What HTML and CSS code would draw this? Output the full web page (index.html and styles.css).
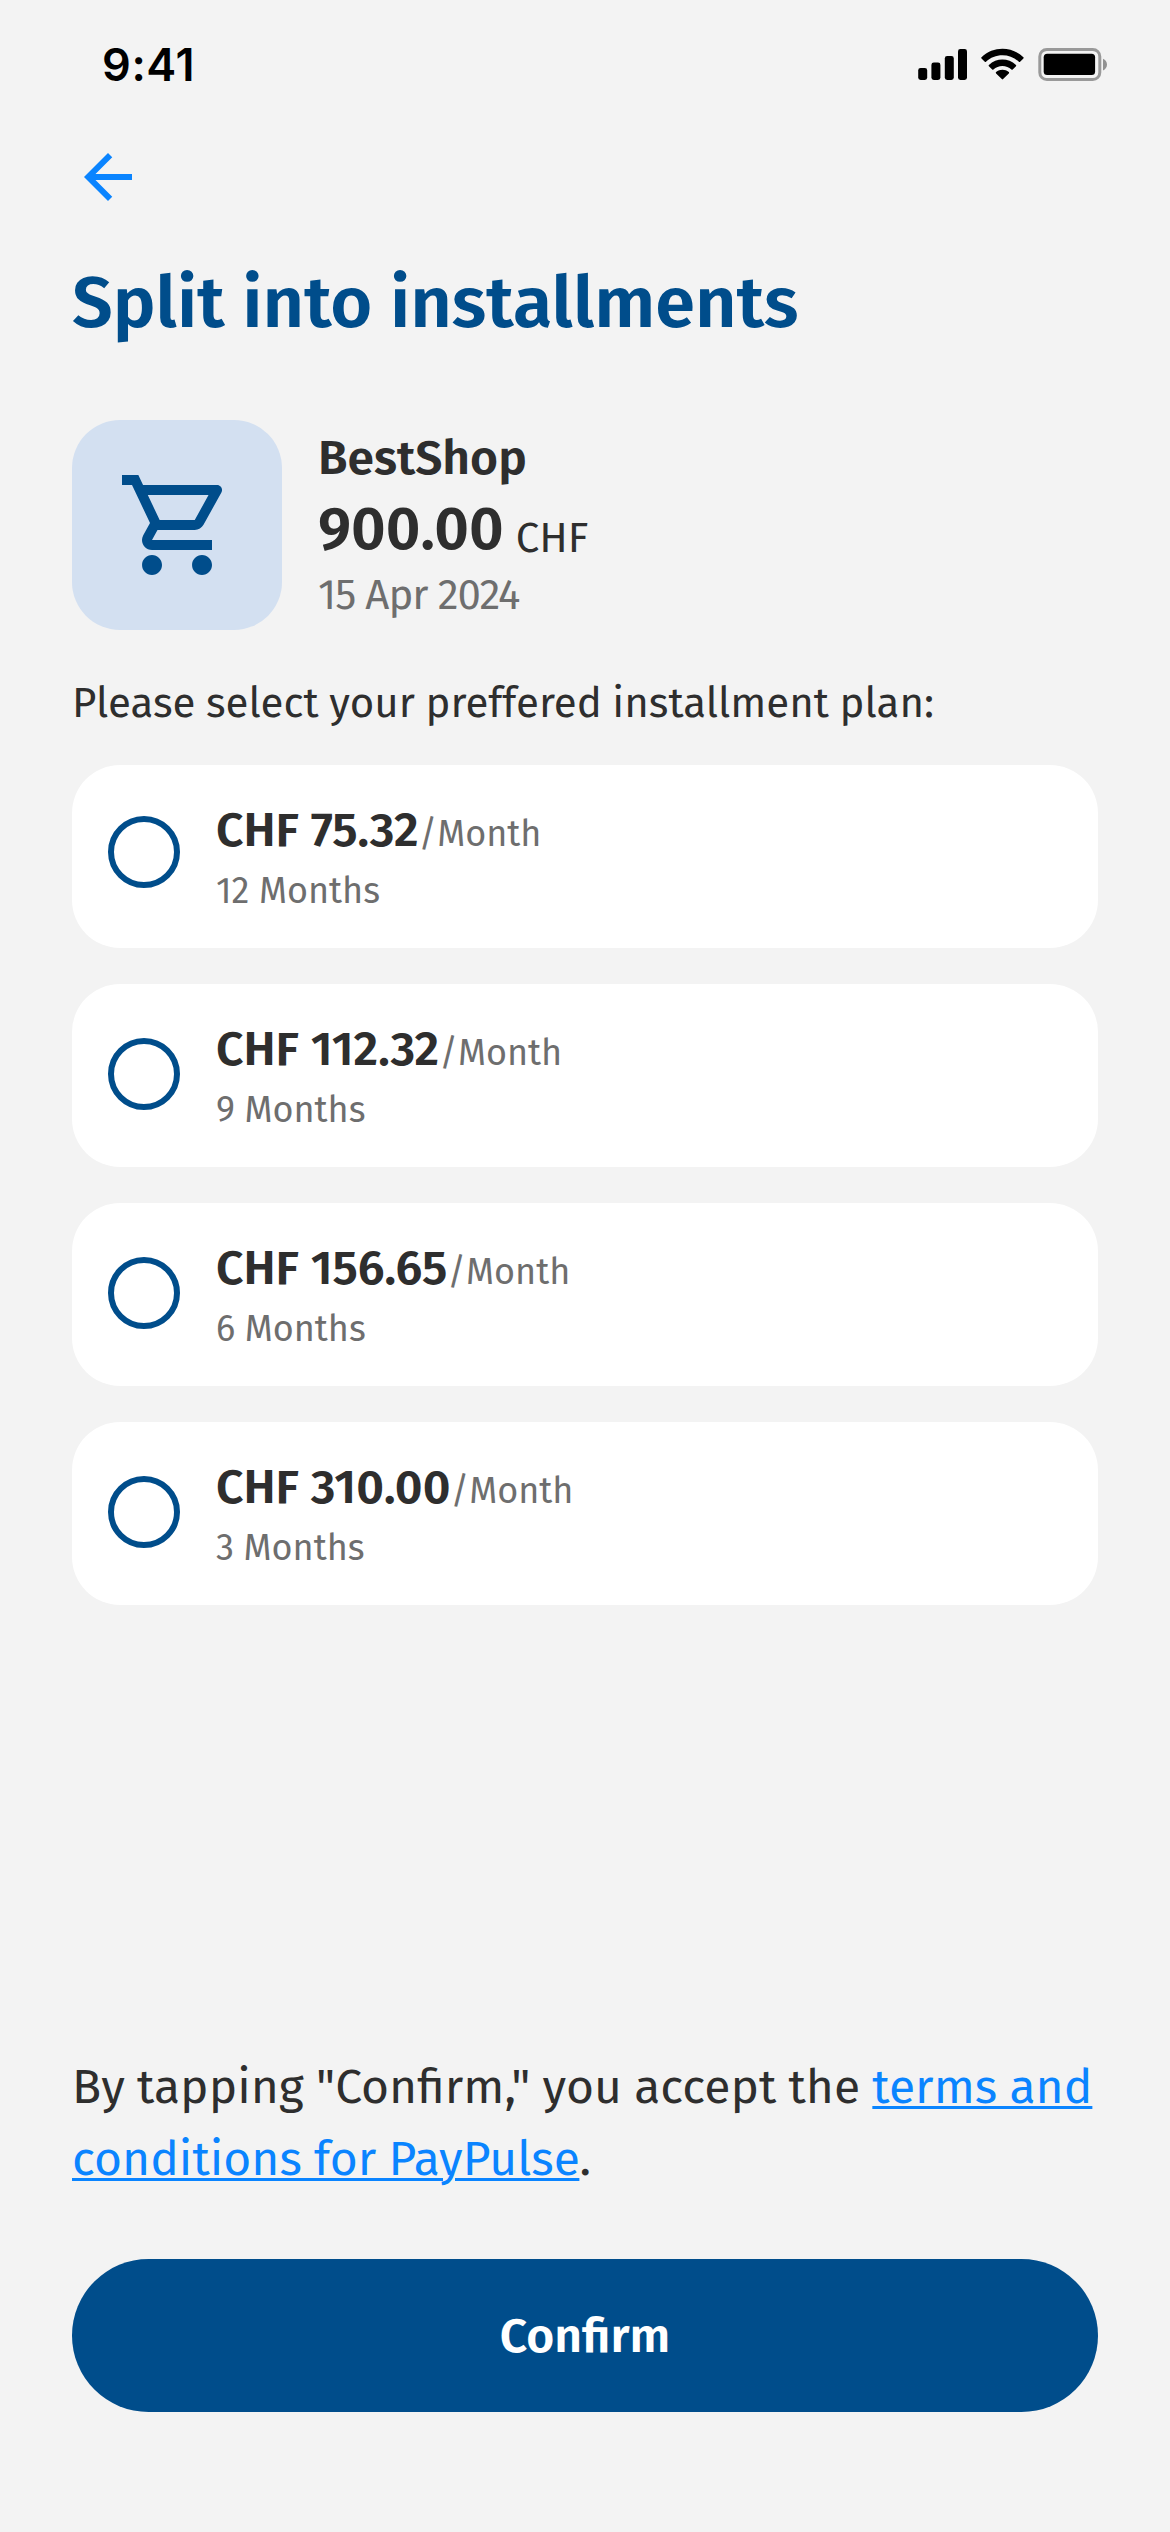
FILE: index.html
```html
<!DOCTYPE html>
<html lang="en">
<head>
<meta charset="utf-8">
<title>Split into installments</title>
<link rel="stylesheet" href="styles.css">
</head>
<body>
<div class="screen">
  <header class="status-bar">
    <span class="time">9:41</span>
    <svg class="status-icons" width="192" height="36" viewBox="0 0 192 36" aria-hidden="true">
      <rect x="3.2" y="22" width="9" height="12" rx="2.4"/>
      <rect x="16.4" y="16.500" width="9" height="17.500" rx="2.400"/>
      <rect x="29.800" y="10" width="9" height="24" rx="2.400"/>
      <rect x="43" y="3" width="9" height="31" rx="2.400"/>
      <path d="M87.400 8.300C93.500 8.300 99.400 10.600 103.900 14.800C104.200 15.100 104.800 15.100 105.100 14.800L108.400 11.500C108.800 11.100 108.800 10.500 108.400 10.200C96.700-1 78.200-1 66.500 10.200C66.100 10.500 66.100 11.100 66.500 11.500L69.800 14.800C70.100 15.100 70.700 15.100 71 14.800C75.400 10.600 81.300 8.300 87.400 8.300ZM87.400 19.100C90.800 19.100 94 20.300 96.400 22.600C96.800 22.900 97.300 22.900 97.700 22.500L101 19.200C101.300 18.900 101.300 18.300 101 17.900C93.300 10.700 81.500 10.700 73.900 17.900C73.500 18.300 73.500 18.900 73.900 19.200L77.200 22.500C77.500 22.900 78.100 22.900 78.400 22.600C80.900 20.300 84.100 19.100 87.400 19.100ZM93.800 25.100C94.200 25.500 94.200 26.100 93.800 26.400L88.100 32.100C87.700 32.500 87.100 32.500 86.800 32.100L81.100 26.400C80.700 26.100 80.700 25.500 81.100 25.100C84.700 22 90.200 22 93.800 25.100Z" transform="translate(0 1)"/>
      <rect class="battery-shell" x="124.800" y="3.500" width="60" height="30" rx="7"/>
      <rect x="128.700" y="7.700" width="51.400" height="21.300" rx="3.500"/>
      <path class="battery-cap" d="M188 12.700v11.800c2.500-1 4-3.300 4-5.900s-1.500-4.900-4-5.900z"/>
    </svg>
  </header>

  <nav class="nav">
    <a class="back" href="#" aria-label="Back">
      <svg width="72" height="72" viewBox="0 0 24 24"><path d="M20 11H7.830l5.590-5.590L12 4l-8 8 8 8 1.410-1.410L7.830 13H20v-2z"/></svg>
    </a>
  </nav>

  <main class="content">
    <h1 class="title">Split into installments</h1>

    <section class="purchase">
      <div class="shop-icon">
        <svg width="120" height="120" viewBox="0 0 24 24"><path d="M15.550 13c.75 0 1.410-.41 1.750-1.030l3.580-6.490c.37-.66-.11-1.480-.87-1.480H5.210l-.94-2H1v2h2l3.600 7.590-1.350 2.440C4.520 15.370 5.480 17 7 17h12v-2H7l1.100-2h7.450zM6.160 6h12.150l-2.760 5H8.530L6.160 6zM7 18c-1.100 0-1.990.9-1.990 2S5.900 22 7 22s2-.9 2-2-.9-2-2-2zm10 0c-1.100 0-1.990.9-1.990 2s.89 2 1.990 2 2-.9 2-2-.9-2-2-2z"/></svg>
      </div>
      <div class="purchase-info">
        <div class="shop-name">BestShop</div>
        <div class="total"><strong class="total-value">900.00</strong><span class="currency">CHF</span></div>
        <div class="date">15 Apr 2024</div>
      </div>
    </section>

    <p class="prompt">Please select your preffered installment plan:</p>

    <div class="plans">
      <label class="plan">
        <span class="radio"></span>
        <span class="plan-text">
          <span class="rate"><strong class="amount">CHF 75.32</strong><span class="per">/Month</span></span>
          <span class="term">12 Months</span>
        </span>
      </label>
      <label class="plan">
        <span class="radio"></span>
        <span class="plan-text">
          <span class="rate"><strong class="amount">CHF 112.32</strong><span class="per">/Month</span></span>
          <span class="term">9 Months</span>
        </span>
      </label>
      <label class="plan">
        <span class="radio"></span>
        <span class="plan-text">
          <span class="rate"><strong class="amount">CHF 156.65</strong><span class="per">/Month</span></span>
          <span class="term">6 Months</span>
        </span>
      </label>
      <label class="plan">
        <span class="radio"></span>
        <span class="plan-text">
          <span class="rate"><strong class="amount">CHF 310.00</strong><span class="per">/Month</span></span>
          <span class="term">3 Months</span>
        </span>
      </label>
    </div>
  </main>

  <footer class="footer">
    <p class="legal">By tapping "Confirm," you accept the <a class="link" href="#">terms and<br>conditions for PayPulse</a>.</p>
    <button class="confirm" type="button">Confirm</button>
  </footer>
</div>
</body>
</html>
```
FILE: styles.css
```css
* { box-sizing: border-box; }

body {
  margin: 0;
  background: #f3f3f3;
  color: #2e2e2e;
  font-family: "Fira Sans", "Open Sans", "Noto Sans", sans-serif;
}

.screen {
  display: flex;
  flex-direction: column;
  width: 1170px;
  height: 2532px;
}

/* Status bar */
.status-bar {
  display: flex;
  justify-content: space-between;
  align-items: flex-start;
  height: 141px;
  padding: 38px 63px 0 102px;
}
.time {
  font: 600 45px/54px Inter, sans-serif;
  letter-spacing: 0.6px;
  color: #000;
}
.status-icons { margin-top: 8px; }
.battery-shell { fill: none; stroke: #000; stroke-opacity: .37; stroke-width: 3; }
.battery-cap { fill-opacity: .4; }

/* Navigation */
.nav { padding: 0 72px; }
.back { display: block; width: 72px; height: 72px; }
.back svg { display: block; fill: #0a84ff; }

.content { padding: 48px 72px 0; }

.title {
  margin: 0;
  font-size: 72px;
  line-height: 84px;
  font-weight: 600;
  color: #004d8b;
}

/* Purchase summary */
.purchase {
  display: flex;
  gap: 36px;
  margin-top: 75px;
}
.shop-icon {
  display: grid;
  place-items: center;
  width: 210px;
  height: 210px;
  border-radius: 48px;
  background: #d3e0f1;
}
.shop-icon svg { fill: #004d8b; }
.purchase-info { padding-top: 8px; white-space: nowrap; }
.shop-name {
  font-size: 48px;
  line-height: 60px;
  font-weight: 600;
}
.total {
  display: flex;
  align-items: baseline;
  height: 72px;
  margin-top: 5px;
  line-height: 72px;
}
.total-value { font-size: 60px; font-weight: 600; }
.currency {
  position: relative;
  top: 3px;
  margin-left: 12px;
  font-size: 42px;
}
.date {
  margin-top: 3px;
  font-size: 42px;
  line-height: 54px;
  letter-spacing: -1px;
  color: #6e6e6e;
}

.prompt {
  margin: 46px 0 35px;
  font-size: 42px;
  line-height: 54px;
  word-spacing: -0.6px;
  white-space: nowrap;
}

/* Installment plans */
.plans { display: grid; gap: 36px; }
.plan {
  display: flex;
  gap: 36px;
  height: 183px;
  padding: 35px 36px 0;
  border-radius: 48px;
  background: #fff;
}
.radio {
  width: 72px;
  height: 72px;
  margin-top: 19px;
  border: 6px solid #004d8b;
  border-radius: 50%;
}
.plan:first-child .radio { margin-top: 16px; }
.plan-text { display: flex; flex-direction: column; gap: 7px; }
.rate {
  display: flex;
  align-items: baseline;
  height: 60px;
  line-height: 60px;
}
.amount { font-size: 48px; font-weight: 600; }
.per { font-size: 36px; color: #6e6e6e; }
.term { font-size: 36px; line-height: 48px; color: #6e6e6e; }

/* Footer */
.footer { margin-top: auto; padding: 0 72px 120px; }
.legal {
  margin: 0 0 64px;
  font-size: 48px;
  line-height: 72px;
  word-spacing: -0.5px;
  white-space: nowrap;
}
.link {
  color: #0a84ff;
  text-decoration: underline;
  text-decoration-thickness: 3px;
  text-underline-offset: 3px;
}
.confirm {
  display: block;
  width: 100%;
  height: 153px;
  border: 0;
  border-radius: 77px;
  background: #004d8b;
  color: #fff;
  font: 600 48px/60px "Fira Sans", "Open Sans", "Noto Sans", sans-serif;
}
```
